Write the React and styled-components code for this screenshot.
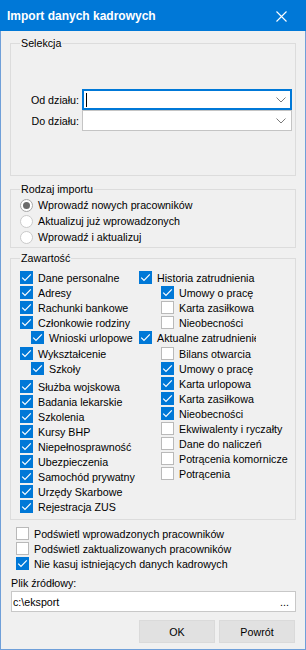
import React from 'react'
import styled, { createGlobalStyle } from 'styled-components'

const GlobalStyle = createGlobalStyle`
  html, body {
    margin: 0;
    padding: 0;
    background: #f0f0f0;
  }
  body {
    font-family: "Liberation Sans", Arial, sans-serif;
    font-size: 10.7px;
    color: #000;
  }
`

const Window = styled.div`
  width: 306px;
  height: 650px;
  box-sizing: border-box;
  border: 1px solid #6f9fd9;
  border-top: none;
  background: #f0f0f0;
  display: flex;
  flex-direction: column;
`

const TitleBar = styled.div`
  height: 31px;
  margin: 0 -1px;
  box-sizing: border-box;
  padding: 1px 19px 0 7px;
  background: #0078d7;
  color: #fff;
  display: flex;
  align-items: center;
  justify-content: space-between;
  font-weight: bold;
  font-size: 12px;
`

const Body = styled.div`
  padding: 0 9px 6px;
  display: flex;
  flex-direction: column;
`

const GroupBox = styled.fieldset`
  margin: ${(p) => p.$top}px 0 0;
  padding: 0;
  border: 1px solid #dcdcdc;
  min-width: 0;
`

const Legend = styled.legend`
  margin-left: 9px;
  padding: 0 1px;
  line-height: 13px;
  font-size: 10.7px;
`

const SelectGrid = styled.div`
  display: grid;
  grid-template-columns: 68px 210px;
  grid-auto-rows: 21px;
  column-gap: 3px;
  padding: 39px 3px 44px 0;
`

const FieldLabel = styled.div`
  display: flex;
  align-items: center;
  justify-content: flex-end;
`

const Combo = styled.div`
  box-sizing: border-box;
  height: 21px;
  background: #fff;
  border: ${(p) => (p.$focused ? '2px solid #0078d7' : '1px solid #c4c4c4')};
  padding: 0 ${(p) => (p.$focused ? 4 : 5)}px 0 ${(p) => (p.$focused ? 2 : 3)}px;
  display: flex;
  align-items: center;
`

const Caret = styled.span`
  width: 1px;
  height: 14px;
  background: #000;
`

const Chevron = styled.svg`
  margin-left: auto;
  width: 10px;
  height: 6px;
`

const RadioList = styled.div`
  padding: 1px 0 2px 9px;
  display: flex;
  flex-direction: column;
`

const RadioRow = styled.div`
  height: 16px;
  display: flex;
  align-items: center;
  gap: 5px;
`

const Columns = styled.div`
  display: grid;
  grid-template-columns: 119px 1fr;
  padding: 5px 0 5px 9px;
`

const Column = styled.div`
  display: flex;
  flex-direction: column;
`

const CheckRow = styled.div`
  height: 15px;
  margin-top: ${(p) => p.$gap || 0}px;
  padding-left: ${(p) => p.$indent || 0}px;
  display: flex;
  align-items: center;
  gap: 5px;
  white-space: nowrap;
  ${(p) => (p.$clip ? `width: ${p.$clip}px; overflow: hidden;` : '')}
`

const Box = styled.span`
  flex: none;
  width: 13px;
  height: 13px;
  box-sizing: border-box;
  background: ${(p) => (p.$on ? '#0078d7' : '#fff')};
  border: 1px solid ${(p) => (p.$on ? '#0078d7' : '#b9b9b9')};
  display: flex;
  align-items: center;
  justify-content: center;
`

const Options = styled.div`
  margin-top: 6px;
  padding-left: 6px;
  display: flex;
  flex-direction: column;
`

const SourceLabel = styled.div`
  margin: 5px 0 0 1px;
  height: 14px;
  line-height: 14px;
`

const PathBox = styled.div`
  margin: 1px 0 0 1px;
  width: 285px;
  height: 21px;
  box-sizing: border-box;
  background: #fff;
  border: 1px solid #c8c8c8;
  padding: 0 6px 0 1px;
  display: flex;
  align-items: center;
  justify-content: space-between;
`

const Buttons = styled.div`
  margin: 8px 1px 0 0;
  display: flex;
  justify-content: flex-end;
  gap: 4px;
`

const Button = styled.div`
  width: 76px;
  height: 23px;
  box-sizing: border-box;
  background: #e1e1e1;
  border: 1px solid #dadada;
  display: flex;
  align-items: center;
  justify-content: center;
`

const Check = ({ on }) => (
  <Box $on={on}>
    {on && (
      <svg width="11" height="11" viewBox="0 0 11 11">
        <path d="M1.2 5.6 L4 8.4 L9.8 2.4" fill="none" stroke="#fff" strokeWidth="1.2" />
      </svg>
    )}
  </Box>
)

const Radio = ({ on }) => (
  <svg width="13" height="13" viewBox="0 0 13 13">
    <circle cx="6.5" cy="6.5" r="6" fill="#fff" stroke={on ? '#a6a6a6' : '#c9c9c9'} />
    {on && <circle cx="6.5" cy="6.5" r="3.5" fill="#6a6a6a" />}
  </svg>
)

const Item = ({ on, children, ...rest }) => (
  <CheckRow {...rest}>
    <Check on={on} />
    <span>{children}</span>
  </CheckRow>
)

const left = [
  ['Dane personalne', true],
  ['Adresy', true],
  ['Rachunki bankowe', true],
  ['Członkowie rodziny', true],
  ['Wnioski urlopowe', true, 11],
  ['Wykształcenie', true, 0, 1],
  ['Szkoły', true, 11],
  ['Służba wojskowa', true, 0, 3],
  ['Badania lekarskie', true],
  ['Szkolenia', true],
  ['Kursy BHP', true],
  ['Niepełnosprawność', true],
  ['Ubezpieczenia', true],
  ['Samochód prywatny', true],
  ['Urzędy Skarbowe', true],
  ['Rejestracja ZUS', true],
]

const right = [
  ['Historia zatrudnienia', true],
  ['Umowy o pracę', true, 22],
  ['Karta zasiłkowa', false, 22],
  ['Nieobecności', false, 22],
  ['Aktualne zatrudnienie', true, 0, 0, 117],
  ['Bilans otwarcia', false, 22, 1],
  ['Umowy o pracę', true, 22],
  ['Karta urlopowa', true, 22],
  ['Karta zasiłkowa', true, 22],
  ['Nieobecności', true, 22],
  ['Ekwiwalenty i ryczałty', false, 22],
  ['Dane do naliczeń', false, 22],
  ['Potrącenia komornicze', false, 22],
  ['Potrącenia', false, 22],
]

const renderColumn = (items) =>
  items.map(([label, on, indent, gap, clip], i) => (
    <Item key={i} on={on} $indent={indent} $gap={gap} $clip={clip}>
      {label}
    </Item>
  ))

export default function App() {
  return (
    <>
      <GlobalStyle />
      <Window>
        <TitleBar>
          <span>Import danych kadrowych</span>
          <svg width="11" height="11" viewBox="0 0 11 11">
            <path d="M0.5 0.5 L10.5 10.5 M10.5 0.5 L0.5 10.5" stroke="#fff" strokeWidth="1.1" />
          </svg>
        </TitleBar>
        <Body>
          <GroupBox $top={6}>
            <Legend>Selekcja</Legend>
            <SelectGrid>
              <FieldLabel>Od działu:</FieldLabel>
              <Combo $focused>
                <Caret />
                <Chevron viewBox="0 0 10 6">
                  <path d="M0.5 0.5 L5 5 L9.5 0.5" fill="none" stroke="#7a7a7a" />
                </Chevron>
              </Combo>
              <FieldLabel>Do działu:</FieldLabel>
              <Combo>
                <Chevron viewBox="0 0 10 6">
                  <path d="M0.5 0.5 L5 5 L9.5 0.5" fill="none" stroke="#7a7a7a" />
                </Chevron>
              </Combo>
            </SelectGrid>
          </GroupBox>

          <GroupBox $top={7}>
            <Legend>Rodzaj importu</Legend>
            <RadioList>
              <RadioRow>
                <Radio on />
                <span>Wprowadź nowych pracowników</span>
              </RadioRow>
              <RadioRow>
                <Radio />
                <span>Aktualizuj już wprowadzonych</span>
              </RadioRow>
              <RadioRow>
                <Radio />
                <span>Wprowadź i aktualizuj</span>
              </RadioRow>
            </RadioList>
          </GroupBox>

          <GroupBox $top={4}>
            <Legend>Zawartość</Legend>
            <Columns>
              <Column>{renderColumn(left)}</Column>
              <Column>{renderColumn(right)}</Column>
            </Columns>
          </GroupBox>

          <Options>
            <Item on={false}>Podświetl wprowadzonych pracowników</Item>
            <Item on={false}>Podświetl zaktualizowanych pracowników</Item>
            <Item on>Nie kasuj istniejących danych kadrowych</Item>
          </Options>

          <SourceLabel>Plik źródłowy:</SourceLabel>
          <PathBox>
            <span>c:\eksport</span>
            <span>...</span>
          </PathBox>

          <Buttons>
            <Button>OK</Button>
            <Button>Powrót</Button>
          </Buttons>
        </Body>
      </Window>
    </>
  )
}
